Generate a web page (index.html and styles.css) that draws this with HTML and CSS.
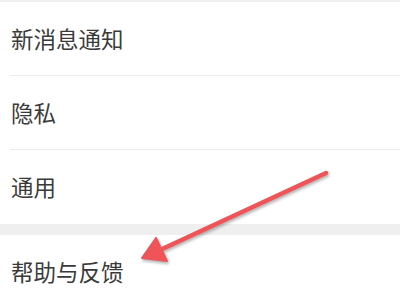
FILE: index.html
```html
<!DOCTYPE html>
<html lang="zh-CN">
<head>
    <meta charset="UTF-8">
    <meta name="viewport" content="width=device-width, initial-scale=1.0">
    <title>设置</title>
    <link rel="stylesheet" href="styles.css">
</head>
<body>
    <main class="settings">
        <ul class="settings-group">
            <li class="settings-item">新消息通知</li>
            <li class="settings-item">隐私</li>
            <li class="settings-item">通用</li>
        </ul>
        <ul class="settings-group">
            <li class="settings-item">帮助与反馈</li>
        </ul>
    </main>

    <!-- annotation arrow pointing at the help item -->
    <svg class="pointer-arrow" width="400" height="300" viewBox="0 0 400 300">
        <line x1="326" y1="173" x2="160" y2="250" stroke="#ef5458" stroke-width="4.5" stroke-linecap="round"/>
        <polygon points="142,258 167,261 156,238" fill="#ef5458" stroke="#ef5458" stroke-width="2" stroke-linejoin="round"/>
    </svg>
</body>
</html>
```

FILE: styles.css
```css
:root {
    --text-color: #3a3a3a;
    --divider-color: #ececec;
    --band-color: #efefef;
}

* {
    margin: 0;
    padding: 0;
    box-sizing: border-box;
}

body {
    background-color: #fff;
    font-family: "Noto Sans CJK SC", "Noto Sans", sans-serif;
    color: var(--text-color);
    width: 400px;
    height: 300px;
    overflow: hidden;
    position: relative;
}

.settings {
    border-top: 2px solid var(--band-color);
}

.settings-group {
    list-style: none;
    background-color: #fff;
}

.settings-group + .settings-group {
    border-top: 11px solid var(--band-color);
}

.settings-item {
    height: 74px;
    display: flex;
    align-items: center;
    padding-left: 11px;
    padding-bottom: 2px;
    font-size: 22.5px;
    position: relative;
}

.settings-item + .settings-item::before {
    content: "";
    position: absolute;
    top: -1px;
    left: 10px;
    right: 0;
    height: 1px;
    background-color: var(--divider-color);
}

.pointer-arrow {
    position: absolute;
    top: 0;
    left: 0;
    filter: drop-shadow(1px 2px 1.5px rgba(0, 0, 0, 0.3));
}
```
